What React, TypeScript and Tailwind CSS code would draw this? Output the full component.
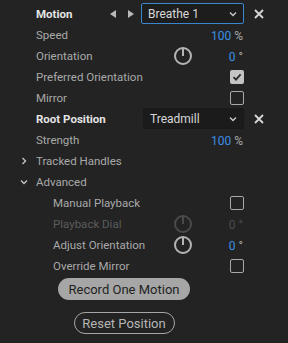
import { ReactNode } from "react"

const font = { fontFamily: 'Roboto, "Noto Sans", sans-serif' }

function Dial({ disabled }: { disabled?: boolean }) {
  const c = disabled ? "#4a4a4a" : "#b4b4b4"
  return (
    <svg width="20" height="20" viewBox="0 0 20 20">
      <circle cx="10" cy="10" r="8" fill="none" stroke={c} strokeWidth="2" />
      <line x1="10" y1="2" x2="10" y2="10" stroke={c} strokeWidth="2" />
    </svg>
  )
}

function Check({ checked }: { checked?: boolean }) {
  if (checked) {
    return (
      <div className="w-[14px] h-[14px] rounded-[2px] bg-[#c4c4c4] flex items-center justify-center">
        <svg width="10" height="10" viewBox="0 0 10 10">
          <path d="M1.5 5.2 L4 7.6 L8.6 2.4" fill="none" stroke="#2a2a2a" strokeWidth="1.8" />
        </svg>
      </div>
    )
  }
  return <div className="w-[14px] h-[14px] rounded-[2px] border-[1.5px] border-[#a8a8a8]" />
}

function Close() {
  return (
    <svg width="10" height="10" viewBox="0 0 10 10">
      <path d="M1 1 L9 9 M9 1 L1 9" stroke="#d8d8d8" strokeWidth="1.8" />
    </svg>
  )
}

function Chevron() {
  return (
    <svg width="10" height="10" viewBox="0 0 10 10">
      <path d="M2 3.5 L5 6.5 L8 3.5" fill="none" stroke="#c8c8c8" strokeWidth="1.4" />
    </svg>
  )
}

function Row({
  label,
  indent = 36,
  strong,
  disabled,
  children,
  extra,
  toggle,
}: {
  label: string
  indent?: number
  strong?: boolean
  disabled?: boolean
  children?: ReactNode
  extra?: ReactNode
  toggle?: "open" | "closed"
}) {
  const color = disabled ? "text-[#5c5c5c]" : strong ? "text-[#e4e4e4] font-bold" : "text-[#a9a9a9]"
  return (
    <div className="relative flex items-center h-[21px] pr-[14px]" style={{ paddingLeft: indent }}>
      {toggle && (
        <div className="absolute left-[19px] top-[6px]">
          {toggle === "open" ? (
            <svg width="10" height="10" viewBox="0 0 10 10">
              <path d="M2 3.5 L5 6.5 L8 3.5" fill="none" stroke="#c0c0c0" strokeWidth="1.4" />
            </svg>
          ) : (
            <svg width="10" height="10" viewBox="0 0 10 10">
              <path d="M3.5 2 L6.5 5 L3.5 8" fill="none" stroke="#c0c0c0" strokeWidth="1.4" />
            </svg>
          )}
        </div>
      )}
      <span className={`flex-1 pt-[2px] text-[11.5px] whitespace-nowrap ${color}`}>{label}</span>
      <div className="flex items-center">{children}</div>
      <div className="w-[30px] flex justify-center">{extra}</div>
    </div>
  )
}

function Percent() {
  return (
    <span className="pt-[2px] text-[12px] mr-[1px]">
      <span className="text-[#3a8fe6]">100</span>
      <span className="text-[#a9a9a9]"> %</span>
    </span>
  )
}

function Degrees({ disabled }: { disabled?: boolean }) {
  return (
    <div className="flex items-center">
      <Dial disabled={disabled} />
      <span className="w-[50px] pt-[2px] text-right text-[12px] mr-[1px]">
        <span className={disabled ? "text-[#4c4c4c]" : "text-[#3a8fe6]"}>0</span>
        <span className={disabled ? "text-[#4c4c4c]" : "text-[#a9a9a9]"}> °</span>
      </span>
    </div>
  )
}

export default function App() {
  return (
    <div className="w-[288px] h-[343px] bg-[#232323] pt-[3px]" style={font}>
      <Row label="Motion" strong extra={<Close />}>
        <div className="flex items-center gap-[12px] mr-[7px]">
          <svg width="6" height="8" viewBox="0 0 6 8">
            <path d="M6 0 L0 4 L6 8 Z" fill="#b8b8b8" />
          </svg>
          <svg width="6" height="8" viewBox="0 0 6 8">
            <path d="M0 0 L6 4 L0 8 Z" fill="#b8b8b8" />
          </svg>
        </div>
        <div className="w-[103px] h-[21px] border border-[#3a86cf] rounded-[2px] bg-[#1d1d1d] flex items-center justify-between pl-[6px] pr-[5px]">
          <span className="text-[12px] text-[#d8d8d8]">Breathe 1</span>
          <Chevron />
        </div>
      </Row>
      <Row label="Speed">
        <Percent />
      </Row>
      <Row label="Orientation">
        <Degrees />
      </Row>
      <Row label="Preferred Orientation">
        <Check checked />
      </Row>
      <Row label="Mirror">
        <Check />
      </Row>
      <Row label="Root Position" strong extra={<Close />}>
        <div className="w-[101px] h-[21px] border border-[#191919] rounded-[2px] bg-[#1b1b1b] flex items-center justify-between pl-[6px] pr-[5px]">
          <span className="text-[12px] text-[#d8d8d8]">Treadmill</span>
          <Chevron />
        </div>
      </Row>
      <Row label="Strength">
        <Percent />
      </Row>
      <Row label="Tracked Handles" toggle="closed" />
      <Row label="Advanced" toggle="open" />
      <Row label="Manual Playback" indent={53}>
        <Check />
      </Row>
      <Row label="Playback Dial" indent={53} disabled>
        <Degrees disabled />
      </Row>
      <Row label="Adjust Orientation" indent={53}>
        <Degrees />
      </Row>
      <Row label="Override Mirror" indent={53}>
        <Check />
      </Row>
      <div className="w-[248px] flex flex-col items-center pt-[2px]">
        <button className="w-[132px] h-[22px] rounded-full bg-[#a6a6a6] text-[#1f1f1f] text-[13px] leading-none">
          Record One Motion
        </button>
        <button className="mt-[12px] w-[101px] h-[22px] rounded-full border-[1.5px] border-[#a6a6a6] text-[#b6b6b6] text-[13px] leading-none">
          Reset Position
        </button>
      </div>
    </div>
  )
}
